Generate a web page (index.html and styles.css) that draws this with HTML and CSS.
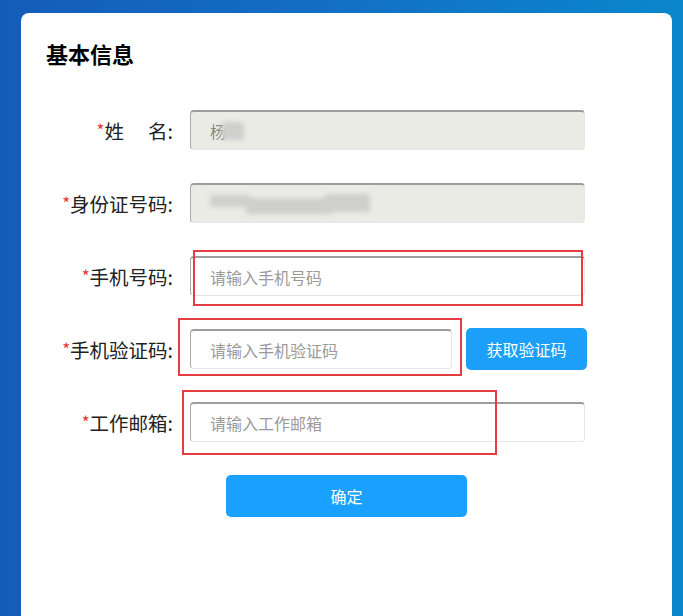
FILE: index.html
```html
<!DOCTYPE html>
<html lang="zh-CN">
<head>
<meta charset="utf-8">
<title>基本信息</title>
<link rel="stylesheet" href="styles.css">
</head>
<body>
<div class="card">
  <h2 class="title">基本信息</h2>
  <form class="form">
    <div class="row">
      <label class="label"><span class="req">*</span>姓<span class="gap"></span>名:</label>
      <div class="input is-disabled"><span class="value">杨</span><span class="blur blur-name"></span></div>
    </div>
    <div class="row">
      <label class="label"><span class="req">*</span>身份证号码:</label>
      <div class="input is-disabled"><span class="blur blur-id1"></span><span class="blur blur-id2"></span><span class="blur blur-id3"></span></div>
    </div>
    <div class="row">
      <label class="label"><span class="req">*</span>手机号码:</label>
      <input class="input" type="text" placeholder="请输入手机号码">
    </div>
    <div class="row">
      <label class="label"><span class="req">*</span>手机验证码:</label>
      <input class="input input-code" type="text" placeholder="请输入手机验证码">
      <button class="btn btn-code" type="button">获取验证码</button>
    </div>
    <div class="row">
      <label class="label"><span class="req">*</span>工作邮箱:</label>
      <input class="input" type="text" placeholder="请输入工作邮箱">
    </div>
    <button class="btn btn-submit" type="button">确定</button>
  </form>
  <div class="mark mark-1"></div>
  <div class="mark mark-2"></div>
  <div class="mark mark-3"></div>
</div>
</body>
</html>
```

FILE: styles.css
```css
* { box-sizing: border-box; }
html, body { height: 100%; }
body {
  margin: 0;
  background: linear-gradient(90deg, #145cb8 0%, #1370c4 50%, #0a87cd 100%);
  font-family: "Microsoft YaHei", "Noto Sans CJK SC", "Noto Sans", sans-serif;
  overflow: hidden;
}
.card {
  position: relative;
  margin: 13px 11px 0 21px;
  height: 603px;
  background: #fff;
  border-radius: 8px 8px 0 0;
  padding: 27px 0 0 25px;
}
.title {
  margin: 0;
  font-size: 22px;
  line-height: 26px;
  font-weight: 700;
  color: #000;
}
.form {
  margin-top: 44px;
  margin-left: -25px;
}
.row {
  display: flex;
  align-items: center;
  height: 40px;
  margin-bottom: 33px;
}
.label {
  width: 152px;
  margin-right: 17px;
  text-align: right;
  font-size: 19.5px;
  color: #222;
  white-space: nowrap;
}
.req {
  color: #e53935;
  font-size: 17px;
  vertical-align: 2px;
}
.gap { display: inline-block; width: 24px; }
.input {
  width: 395px;
  height: 40px;
  border: 1px solid #e6e6e6;
  border-top: 2px solid #9d9d9d;
  border-left: 1px solid #a9a9a9;
  border-radius: 4px;
  padding: 0 19px;
  font-family: inherit;
  font-size: 16px;
  color: #333;
  background: #fff;
  outline: none;
  display: flex;
  align-items: center;
}
.input::placeholder { color: #9a9a9a; font-size: 16px; }
.is-disabled { background: #ebebe5; }
.value { color: #888; font-size: 16px; }
.blur {
  display: inline-block;
  background: #cfcfcd;
  filter: blur(2px);
  border-radius: 3px;
}
.blur-name { width: 22px; height: 18px; margin-left: -4px; }
.blur-id1 { width: 40px; height: 12px; margin-top: -6px; }
.blur-id2 { width: 85px; height: 16px; margin-left: -4px; margin-top: 4px; }
.blur-id3 { width: 45px; height: 18px; margin-left: -6px; margin-top: -2px; }
.input-code { width: 262px; }
.btn {
  border: 0;
  border-radius: 5px;
  background: #1c9ff8;
  color: #fff;
  font-family: inherit;
  font-size: 16px;
  cursor: pointer;
}
.btn-code {
  margin-left: 14px;
  width: 121px;
  height: 42px;
}
.btn-submit {
  display: block;
  margin-left: 205px;
  width: 241px;
  height: 42px;
  background: #1aa1ff;
}
.mark {
  position: absolute;
  border: 2px solid #e53c41;
  pointer-events: none;
}
.mark-1 { left: 172px; top: 237px; width: 390px; height: 56px; }
.mark-2 { left: 157px; top: 305px; width: 284px; height: 58px; }
.mark-3 { left: 161px; top: 377px; width: 315px; height: 65px; }
```
